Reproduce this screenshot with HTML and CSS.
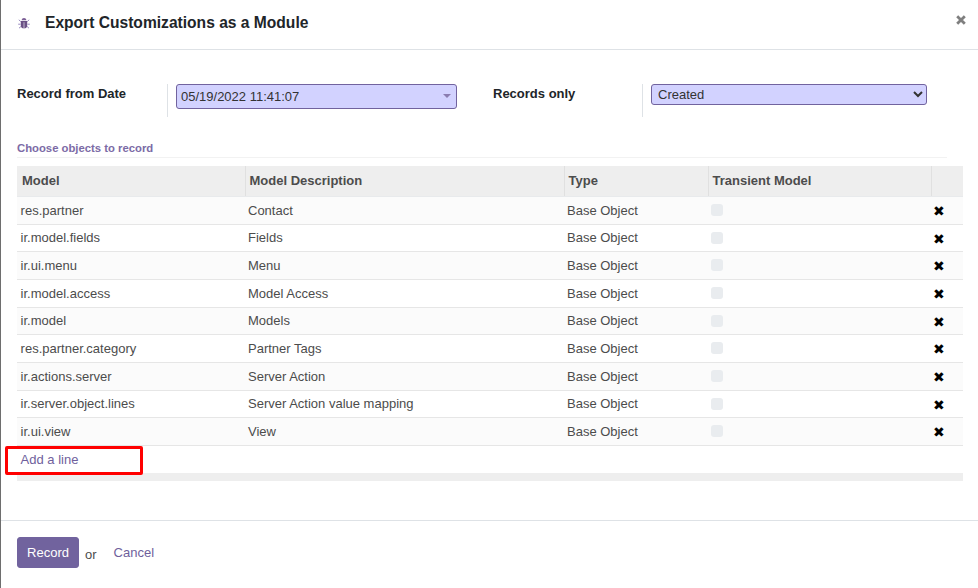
FILE: index.html
```html
<!DOCTYPE html>
<html lang="en">

<head>
    <meta charset="UTF-8">
    <title>Export Customizations as a Module</title>
    <link rel="stylesheet" href="styles.css">
</head>

<body>
    <div class="modal">
        <header class="modal-header">
            <svg class="bug-icon" viewBox="0 0 14 14" width="14" height="14">
                <path d="M4.6 4.2C4.8 2.8 5.8 2 7 2s2.2.8 2.4 2.2z" fill="#7c5f96" />
                <path d="M3.8 5h6.4v4.6C10.200 11.400 8.800 12.500 7.300 12.500V6.200H6.700v6.300C5.200 12.500 3.800 11.400 3.800 9.600z" fill="#6a5085" />
                <path d="M3.800 5.600 1.800 3.800M10.200 5.600l2-1.800M3.600 8.200H1.200M10.400 8.200h2.400M4 10.400l-2 1.800M10 10.400l2 1.800" stroke="#9a8cc0" stroke-width="1" fill="none" />
            </svg>
            <h1>Export Customizations as a Module</h1>
            <svg class="close-icon" viewBox="0 0 10 10" width="10" height="10">
                <path d="M1.200 1.200l7.600 7.600M8.800 1.200l-7.600 7.600" stroke="#7f7f7f" stroke-width="2.800" fill="none" />
            </svg>
        </header>

        <main class="modal-body">
            <div class="form-row">
                <label class="field-label">Record from Date</label>
                <div class="field-value">
                    <div class="date-input">
                        <span>05/19/2022 11:41:07</span>
                        <span class="caret"></span>
                    </div>
                </div>
                <label class="field-label">Records only</label>
                <div class="field-value">
                    <select class="select-input">
                        <option>Created</option>
                    </select>
                </div>
            </div>

            <div class="section-title">Choose objects to record</div>

            <div class="table-wrap">
                <table class="lines">
                    <colgroup>
                        <col class="col-model">
                        <col class="col-desc">
                        <col class="col-type">
                        <col class="col-transient">
                        <col>
                    </colgroup>
                    <thead>
                        <tr>
                            <th>Model</th>
                            <th>Model Description</th>
                            <th>Type</th>
                            <th>Transient Model</th>
                            <th></th>
                        </tr>
                    </thead>
                    <tbody>
                        <tr>
                            <td>res.partner</td>
                            <td>Contact</td>
                            <td>Base Object</td>
                            <td><span class="check"></span></td>
                            <td class="remove">&#10006;</td>
                        </tr>
                        <tr>
                            <td>ir.model.fields</td>
                            <td>Fields</td>
                            <td>Base Object</td>
                            <td><span class="check"></span></td>
                            <td class="remove">&#10006;</td>
                        </tr>
                        <tr>
                            <td>ir.ui.menu</td>
                            <td>Menu</td>
                            <td>Base Object</td>
                            <td><span class="check"></span></td>
                            <td class="remove">&#10006;</td>
                        </tr>
                        <tr>
                            <td>ir.model.access</td>
                            <td>Model Access</td>
                            <td>Base Object</td>
                            <td><span class="check"></span></td>
                            <td class="remove">&#10006;</td>
                        </tr>
                        <tr>
                            <td>ir.model</td>
                            <td>Models</td>
                            <td>Base Object</td>
                            <td><span class="check"></span></td>
                            <td class="remove">&#10006;</td>
                        </tr>
                        <tr>
                            <td>res.partner.category</td>
                            <td>Partner Tags</td>
                            <td>Base Object</td>
                            <td><span class="check"></span></td>
                            <td class="remove">&#10006;</td>
                        </tr>
                        <tr>
                            <td>ir.actions.server</td>
                            <td>Server Action</td>
                            <td>Base Object</td>
                            <td><span class="check"></span></td>
                            <td class="remove">&#10006;</td>
                        </tr>
                        <tr>
                            <td>ir.server.object.lines</td>
                            <td>Server Action value mapping</td>
                            <td>Base Object</td>
                            <td><span class="check"></span></td>
                            <td class="remove">&#10006;</td>
                        </tr>
                        <tr>
                            <td>ir.ui.view</td>
                            <td>View</td>
                            <td>Base Object</td>
                            <td><span class="check"></span></td>
                            <td class="remove">&#10006;</td>
                        </tr>
                    </tbody>
                </table>
                <div class="add-line"><a href="#">Add a line</a></div>
                <div class="highlight"></div>
                <div class="table-foot"></div>
            </div>
        </main>

        <footer class="modal-footer">
            <button class="btn-record" type="button">Record</button>
            <span class="or">or</span>
            <a class="cancel" href="#">Cancel</a>
        </footer>
    </div>
</body>

</html>
```

FILE: styles.css
```css
/* Page and dialog frame */
body {
    margin: 0;
    background: #ffffff;
    font-family: "Liberation Sans", Arial, sans-serif;
    font-size: 13px;
    color: #4c4c4c;
    overflow: hidden;
}

a {
    color: #6f5f9c;
    text-decoration: none;
}

.modal {
    height: 588px;
    box-sizing: border-box;
    border-left: 1px solid #6e6e6e;
    display: flex;
    flex-direction: column;
}

/* Header */
.modal-header {
    flex: none;
    display: flex;
    align-items: center;
    padding: 0 12px 4px 16px;
    box-sizing: border-box;
    height: 50px;
    border-bottom: 1px solid #dee2e6;
}

.bug-icon {
    margin-right: 14px;
    flex: none;
}

h1 {
    margin: 0;
    flex: 1;
    font-size: 15.6px;
    font-weight: bold;
    color: #212529;
}

.close-icon {
    flex: none;
    margin-top: -6px;
}

/* Body */
.modal-body {
    flex: 1;
    padding: 34px 15px 0 16px;
}

.form-row {
    display: grid;
    grid-template-columns: 150px 326px 149px 285px;
    height: 33px;
}

.field-label {
    font-weight: bold;
    color: #212529;
    padding-top: 2px;
}

.field-value {
    border-left: 1px solid #dee2e6;
    padding-left: 8px;
}

.date-input {
    width: 281px;
    height: 25px;
    box-sizing: border-box;
    display: flex;
    align-items: center;
    justify-content: space-between;
    padding: 0 5px 0 4px;
    background: #d2d2ff;
    border: 1px solid #71639e;
    border-radius: 3px;
    color: #333333;
}

.caret {
    width: 0;
    height: 0;
    border-left: 4px solid transparent;
    border-right: 4px solid transparent;
    border-top: 4px solid #8a7cb0;
    margin-top: -1px;
}

.select-input {
    display: block;
    width: 276px;
    height: 21px;
    box-sizing: border-box;
    padding: 0 0 0 2px;
    background-color: #d2d2ff;
    border: 1px solid #71639e;
    border-radius: 3px;
    font-family: inherit;
    font-size: 13px;
    color: #333333;
}

.section-title {
    margin-top: 25px;
    width: 930px;
    height: 15px;
    border-bottom: 1px solid #f2f2f2;
    font-size: 11.3px;
    font-weight: bold;
    line-height: 13px;
    color: #7c6ba6;
}

/* Lines table */
.table-wrap {
    position: relative;
    margin-top: 8px;
    width: 946px;
}

.lines {
    width: 100%;
    border-collapse: collapse;
    table-layout: fixed;
}

.col-model {
    width: 228px;
}

.col-desc {
    width: 319px;
}

.col-type {
    width: 144px;
}

.col-transient {
    width: 223px;
}

.lines th {
    height: 30.67px;
    padding: 0 4px 1px 4px;
    background: #eeeeee;
    border-left: 1px solid #e0e0e0;
    border-bottom: 1px solid #e8eaec;
    box-sizing: border-box;
    text-align: left;
    font-weight: bold;
    color: #4c4c4c;
    background-clip: padding-box;
}

.lines th:first-child {
    border-left: none;
    padding-left: 5px;
}

.lines td {
    height: 27.67px;
    padding: 0 3px 0.67px;
    box-sizing: border-box;
    border-bottom: 1px solid #e6e6e6;
    background: #ffffff;
}

.lines td:first-child {
    padding-left: 3.6px;
}

.lines tbody tr:nth-child(odd) td {
    background: #fbfbfb;
}

.check {
    display: block;
    width: 12px;
    height: 12px;
    border-radius: 3px;
    background: #e9ecef;
}

.lines td.remove {
    padding: 1px 0 0 2px;
    font-size: 14px;
    color: #000000;
}

.add-line {
    height: 27.33px;
    line-height: 27px;
    padding-left: 3.6px;
}

.table-foot {
    height: 8px;
    background: #eeeeee;
}

/* Red annotation box around the add-a-line link */
.highlight {
    position: absolute;
    left: -12px;
    top: 280px;
    width: 138px;
    height: 29px;
    box-sizing: border-box;
    border: 3px solid #ff0000;
    border-radius: 2px;
}

/* Footer */
.modal-footer {
    flex: none;
    height: 68px;
    box-sizing: border-box;
    border-top: 1px solid #dee2e6;
    padding: 16px 0 0 16px;
    display: flex;
    align-items: flex-start;
}

.btn-record {
    width: 62px;
    height: 31px;
    padding: 0;
    background: #71639e;
    border: 1px solid #71639e;
    border-radius: 3px;
    font-family: inherit;
    font-size: 13px;
    color: #ffffff;
}

.or {
    margin: 10px 0 0 6px;
}

.cancel {
    margin: 8px 0 0 17px;
}
```
